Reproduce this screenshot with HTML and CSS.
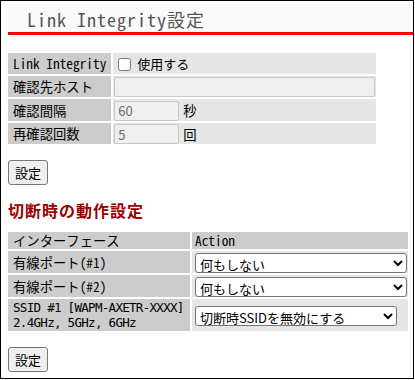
FILE: index.html
```html
<!DOCTYPE html>
<html lang="ja">
<head>
    <meta charset="UTF-8">
    <meta name="viewport" content="width=device-width, initial-scale=1.0">
    <title>Link Integrity設定</title>
    <link rel="stylesheet" href="styles.css">
</head>
<body>
    <div class="frame">
        <div class="page-title">
            <h1>Link Integrity設定</h1>
        </div>

        <form onsubmit="return false;">
            <table class="form-table basic">
                <tr>
                    <th>Link Integrity</th>
                    <td>
                        <label class="check"><input type="checkbox" id="li-enable"> 使用する</label>
                    </td>
                </tr>
                <tr>
                    <th>確認先ホスト</th>
                    <td><input type="text" class="host" disabled></td>
                </tr>
                <tr>
                    <th>確認間隔</th>
                    <td><input type="text" class="num" value="60" disabled><span class="unit">秒</span></td>
                </tr>
                <tr>
                    <th>再確認回数</th>
                    <td><input type="text" class="num" value="5" disabled><span class="unit">回</span></td>
                </tr>
            </table>

            <div class="buttons">
                <button type="submit">設定</button>
            </div>
        </form>

        <form onsubmit="return false;">
            <h2>切断時の動作設定</h2>

            <table class="form-table action">
                <tr class="head">
                    <th>インターフェース</th>
                    <th class="col-action">Action</th>
                </tr>
                <tr>
                    <th>有線ポート(#1)</th>
                    <td>
                        <select class="wide">
                            <option>何もしない</option>
                            <option>ポートを無効にする</option>
                        </select>
                    </td>
                </tr>
                <tr>
                    <th>有線ポート(#2)</th>
                    <td>
                        <select class="wide">
                            <option>何もしない</option>
                            <option>ポートを無効にする</option>
                        </select>
                    </td>
                </tr>
                <tr>
                    <th class="ssid">SSID #1 [WAPM-AXETR-XXXX]<br>2.4GHz, 5GHz, 6GHz</th>
                    <td>
                        <select class="ssid-sel">
                            <option>切断時SSIDを無効にする</option>
                            <option>何もしない</option>
                        </select>
                    </td>
                </tr>
            </table>

            <div class="buttons">
                <button type="submit">設定</button>
            </div>
        </form>
    </div>

    <script>
        const enable = document.getElementById('li-enable');
        enable.addEventListener('change', function () {
            document.querySelectorAll('.basic input[type=text]').forEach(function (el) {
                el.disabled = !enable.checked;
            });
        });
    </script>
</body>
</html>
```

FILE: styles.css
```css
body {
    margin: 0;
    background-color: #fff;
    color: #000;
    font-family: "Noto Sans Mono CJK JP", "Noto Sans CJK JP", monospace;
    font-size: 13.33px;
}
.frame {
    box-sizing: border-box;
    width: 414px;
    height: 379px;
    border: 1px solid #000;
    padding: 3px 0 0 7px;
    overflow: hidden;
}
.page-title {
    background-color: #fafafa;
    border-bottom: 3px solid #f00;
    height: 28px;
}
.page-title h1 {
    margin: 0;
    padding-left: 19px;
    font-size: 18px;
    font-weight: normal;
    line-height: 30px;
    letter-spacing: 1px;
    color: #555;
}
.form-table {
    border-collapse: separate;
    border-spacing: 2px;
    margin-left: -2px;
}
.form-table th {
    background-color: #ccc;
    font-weight: normal;
    text-align: left;
    padding: 0 5px;
    white-space: nowrap;
}
.form-table td {
    background-color: #e6e6e6;
    padding: 0 1px;
}
.basic {
    width: 372px;
    margin-top: 16px;
}
.basic th {
    width: 94px;
    height: 21px;
}
.basic input[type=checkbox] {
    width: 13px;
    height: 13px;
    margin: 0 3px 0 4px;
    vertical-align: -2px;
}
.check {
    font-family: "Noto Sans CJK JP", sans-serif;
    font-size: 13px;
}
.basic input[type=text] {
    box-sizing: border-box;
    height: 20px;
    margin: 0;
    padding: 0 3px;
    border: 1px solid #c8c8c8;
    border-radius: 2px;
    background-color: #efefef;
    color: #6d6d6d;
    font-family: "Noto Sans CJK JP", sans-serif;
    font-size: 13px;
    vertical-align: middle;
}
.basic input.host {
    width: 261px;
}
.basic input.num {
    width: 65px;
}
.unit {
    margin-left: 4px;
    vertical-align: middle;
}
.buttons {
    margin-top: 14px;
}
.buttons button {
    height: 25px;
    padding: 0 6px;
    font-family: "Noto Sans CJK JP", sans-serif;
    font-size: 13px;
    background-color: #efefef;
    border: 1px solid #767676;
    border-radius: 3px;
    color: #000;
}
h2 {
    margin: 15px 0 10px;
    font-size: 16px;
    line-height: 20px;
    letter-spacing: 1px;
    color: #990000;
}
.action {
    width: 404px;
}
.action th {
    width: 172px;
}
.action tr.head th {
    height: 17px;
    line-height: 17px;
}
.action th.col-action {
    width: auto;
    padding-left: 3px;
}
.action tr th, .action tr td {
    height: 22px;
}
.action th.ssid {
    height: 32px;
    font-family: "DejaVu Sans Mono", monospace;
    font-size: 12.5px;
    letter-spacing: -0.7px;
    line-height: 15px;
}
.action td {
    padding: 0 1px 0 3px;
}
.action select {
    height: 20px;
    font-family: "Noto Sans CJK JP", sans-serif;
    font-size: 13px;
    border: 1px solid #767676;
    border-radius: 3px;
    background-color: #fff;
    vertical-align: middle;
}
.action select.wide {
    width: 100%;
}
.action select.ssid-sel {
    width: 202px;
}
```
